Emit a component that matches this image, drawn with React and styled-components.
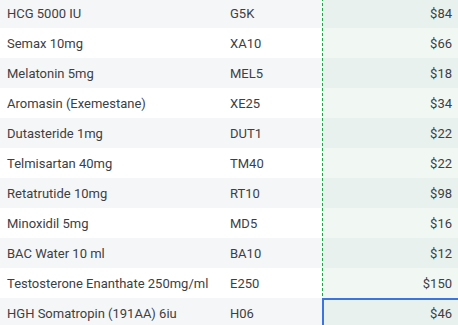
import styled, { createGlobalStyle } from "styled-components";

const GlobalStyle = createGlobalStyle`
  html, body {
    margin: 0;
    padding: 0;
    background: #ffffff;
    overflow: hidden;
  }
  body {
    font-family: Roboto, "Liberation Sans", Arial, sans-serif;
    color: #3c4043;
  }
`;

const Sheet = styled.div`
  width: 460px;
  margin-top: -2px;
  display: flex;
  flex-direction: column;
`;

const Row = styled.div`
  display: grid;
  grid-template-columns: 223px 100px 137px;
  height: 30px;
  background: ${(p) => (p.$striped ? "#f5f6f8" : "#ffffff")};
`;

const Cell = styled.div`
  display: flex;
  align-items: center;
  padding: 0 7px;
  font-size: 13px;
  white-space: nowrap;
  overflow: hidden;
`;

const PriceCell = styled(Cell)`
  justify-content: flex-end;
  padding-right: 8px;
  background-color: ${(p) => (p.$striped ? "#e8f1ed" : "#f1f8f4")};
  background-image: ${(p) =>
    p.$selected
      ? "none"
      : "repeating-linear-gradient(to bottom, #1ea446 0 3px, transparent 3px 5px)"};
  background-size: 1px 100%;
  background-repeat: no-repeat;
  box-shadow: ${(p) => (p.$selected ? "inset 0 0 0 2px #3b73df" : "none")};
  margin-left: -1px;
  padding-left: 8px;
`;

const items = [
  ["HCG 5000 IU", "G5K", "$84"],
  ["Semax 10mg", "XA10", "$66"],
  ["Melatonin 5mg", "MEL5", "$18"],
  ["Aromasin (Exemestane)", "XE25", "$34"],
  ["Dutasteride 1mg", "DUT1", "$22"],
  ["Telmisartan 40mg", "TM40", "$22"],
  ["Retatrutide 10mg", "RT10", "$98"],
  ["Minoxidil 5mg", "MD5", "$16"],
  ["BAC Water 10 ml", "BA10", "$12"],
  ["Testosterone Enanthate 250mg/ml", "E250", "$150"],
  ["HGH Somatropin (191AA) 6iu", "H06", "$46"],
];

const App = () => {
  return (
    <>
      <GlobalStyle />
      <Sheet>
        {items.map(([name, code, price], i) => {
          const striped = i % 2 === 0;
          return (
            <Row key={code} $striped={striped}>
              <Cell>{name}</Cell>
              <Cell>{code}</Cell>
              <PriceCell $striped={striped} $selected={i === items.length - 1}>
                {price}
              </PriceCell>
            </Row>
          );
        })}
      </Sheet>
    </>
  );
};

export default App;
